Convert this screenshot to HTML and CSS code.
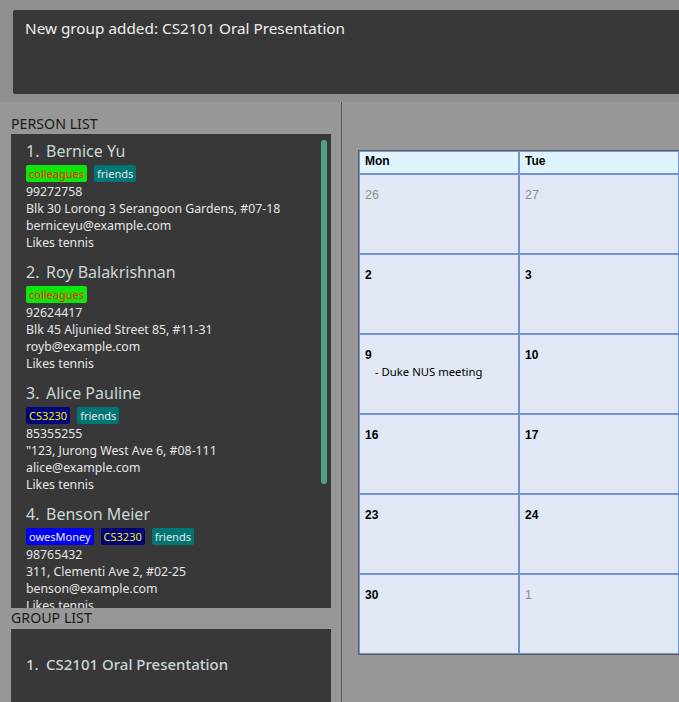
FILE: index.html
```html
<!DOCTYPE html>
<html>
<head>
<meta charset="utf-8">
<link rel="stylesheet" href="styles.css">
</head>
<body>
<div class="app">
  <div class="result-bar">
    <div class="result-box">New group added: CS2101 Oral Presentation</div>
  </div>
  <div class="main">
    <div class="left">
      <div class="section-label">PERSON LIST</div>
      <div class="person-list">
        <div class="scrollbar"></div>
        <div class="card">
          <div class="name"><span class="idx">1.</span>Bernice Yu</div>
          <div class="tags"><span class="tag colleagues">colleagues</span><span class="tag friends">friends</span></div>
          <div class="line">99272758</div>
          <div class="line">Blk 30 Lorong 3 Serangoon Gardens, #07-18</div>
          <div class="line">berniceyu@example.com</div>
          <div class="line">Likes tennis</div>
        </div>
        <div class="card">
          <div class="name"><span class="idx">2.</span>Roy Balakrishnan</div>
          <div class="tags"><span class="tag colleagues">colleagues</span></div>
          <div class="line">92624417</div>
          <div class="line">Blk 45 Aljunied Street 85, #11-31</div>
          <div class="line">royb@example.com</div>
          <div class="line">Likes tennis</div>
        </div>
        <div class="card">
          <div class="name"><span class="idx">3.</span>Alice Pauline</div>
          <div class="tags"><span class="tag cs3230">CS3230</span><span class="tag friends">friends</span></div>
          <div class="line">85355255</div>
          <div class="line">"123, Jurong West Ave 6, #08-111</div>
          <div class="line">alice@example.com</div>
          <div class="line">Likes tennis</div>
        </div>
        <div class="card">
          <div class="name"><span class="idx">4.</span>Benson Meier</div>
          <div class="tags"><span class="tag owes">owesMoney</span><span class="tag cs3230">CS3230</span><span class="tag friends">friends</span></div>
          <div class="line">98765432</div>
          <div class="line">311, Clementi Ave 2, #02-25</div>
          <div class="line">benson@example.com</div>
          <div class="line">Likes tennis</div>
        </div>
      </div>
      <div class="section-label group-label">GROUP LIST</div>
      <div class="group-list">
        <div class="group-card"><span class="gidx">1.</span>CS2101 Oral Presentation</div>
      </div>
    </div>
    <div class="divider"></div>
    <div class="right">
      <div class="calendar">
        <div class="hcell">Mon</div><div class="hcell">Tue</div><div class="hcell">Wed</div>
        <div class="cell"><div class="date other">26</div></div>
        <div class="cell"><div class="date other">27</div></div>
        <div class="cell"><div class="date other">28</div></div>
        <div class="cell"><div class="date">2</div></div>
        <div class="cell"><div class="date">3</div></div>
        <div class="cell"><div class="date">4</div></div>
        <div class="cell"><div class="date">9</div><div class="event">- Duke NUS meeting</div></div>
        <div class="cell"><div class="date">10</div></div>
        <div class="cell"><div class="date">11</div></div>
        <div class="cell"><div class="date">16</div></div>
        <div class="cell"><div class="date">17</div></div>
        <div class="cell"><div class="date">18</div></div>
        <div class="cell"><div class="date">23</div></div>
        <div class="cell"><div class="date">24</div></div>
        <div class="cell"><div class="date">25</div></div>
        <div class="cell"><div class="date">30</div></div>
        <div class="cell"><div class="date other">1</div></div>
        <div class="cell"><div class="date other">2</div></div>
      </div>
    </div>
  </div>
</div>
</body>
</html>
```

FILE: styles.css
```css
html, body {
  margin: 0;
  padding: 0;
}
body {
  background: #979797;
  font-family: "Noto Sans", "DejaVu Sans", sans-serif;
  width: 679px;
  height: 702px;
  overflow: hidden;
}
.app {
  width: 679px;
  height: 702px;
  overflow: hidden;
  display: flex;
  flex-direction: column;
}
.result-bar {
  background: #8f8f8f;
  padding: 10px 0 8px 13px;
  height: 84px;
  flex: none;
}
.result-box {
  background: #383838;
  height: 84px;
  width: 700px;
  border-radius: 2px;
  box-sizing: border-box;
  padding: 7px 12px;
  color: #eeeeee;
  font-size: 15.3px;
  line-height: 22px;
}
.main {
  flex: 1;
  display: flex;
  min-height: 0;
}
.left {
  width: 320px;
  padding-left: 11px;
  padding-right: 10px;
  padding-top: 11px;
  display: flex;
  flex-direction: column;
  flex: none;
}
.section-label {
  color: #1a1a1a;
  font-size: 14.2px;
  line-height: 21px;
  height: 21px;
}
.group-label {
  height: 21px;
  line-height: 19px;
}
.person-list {
  position: relative;
  background: #383838;
  height: 474px;
  overflow: hidden;
  flex: none;
}
.scrollbar {
  position: absolute;
  left: 310px;
  top: 6px;
  width: 6px;
  height: 344px;
  border-radius: 3px;
  background: #4ea08f;
}
.card {
  padding: 7px 15px 4px 15px;
}
.name {
  color: #c9d7d6;
  font-size: 16px;
  line-height: 20px;
  height: 20px;
}
.idx {
  display: inline-block;
  width: 20px;
}
.tags {
  display: flex;
  gap: 7px;
  margin-top: 4px;
  margin-bottom: 1px;
  height: 17px;
}
.tag {
  font-size: 11px;
  line-height: 17px;
  padding: 0 3px;
  border-radius: 2px;
}
.colleagues {
  background: #0de60d;
  color: #ff1a00;
}
.friends {
  background: #007575;
  color: #e8e8e8;
}
.cs3230 {
  background: #00007a;
  color: #f0f000;
}
.owes {
  background: #0000f5;
  color: #f0f0f0;
}
.line {
  color: #e6e6e6;
  font-size: 12.3px;
  line-height: 17px;
  height: 17px;
  white-space: nowrap;
}
.group-list {
  background: #383838;
  flex: 1;
}
.group-card {
  padding: 24px 15px 0 15px;
  color: #c9d7d6;
  font-size: 15px;
  line-height: 22px;
  font-weight: 500;
}
.gidx {
  display: inline-block;
  width: 20px;
}
.divider {
  width: 1px;
  background: #555555;
  flex: none;
}
.right {
  flex: 1;
  padding: 48px 0 0 16px;
  overflow: hidden;
}
.calendar {
  display: grid;
  grid-template-columns: 160px 160px 160px;
  grid-template-rows: 23px repeat(6, 80px);
  width: 480px;
  border: 1px solid #5c5c5c;
  border-right: none;
  font-family: "Liberation Sans", Arial, sans-serif;
}
.hcell {
  background: #e0f4fe;
  border: 1px solid #7394cf;
  padding: 2px 5px;
  font-size: 12px;
  font-weight: bold;
  line-height: 14px;
  color: #000;
}
.cell {
  background: #e1e7f4;
  border: 1px solid #7394cf;
  padding: 13px 5px;
}
.date {
  font-size: 12px;
  font-weight: bold;
  line-height: 14px;
  color: #000;
}
.date.other {
  color: #8c8c8c;
  font-weight: normal;
  font-size: 12.5px;
}
.event {
  margin-top: 3px;
  padding-left: 10px;
  font-family: "Noto Sans", sans-serif;
  font-size: 11.3px;
  line-height: 14px;
  color: #000;
}
```
